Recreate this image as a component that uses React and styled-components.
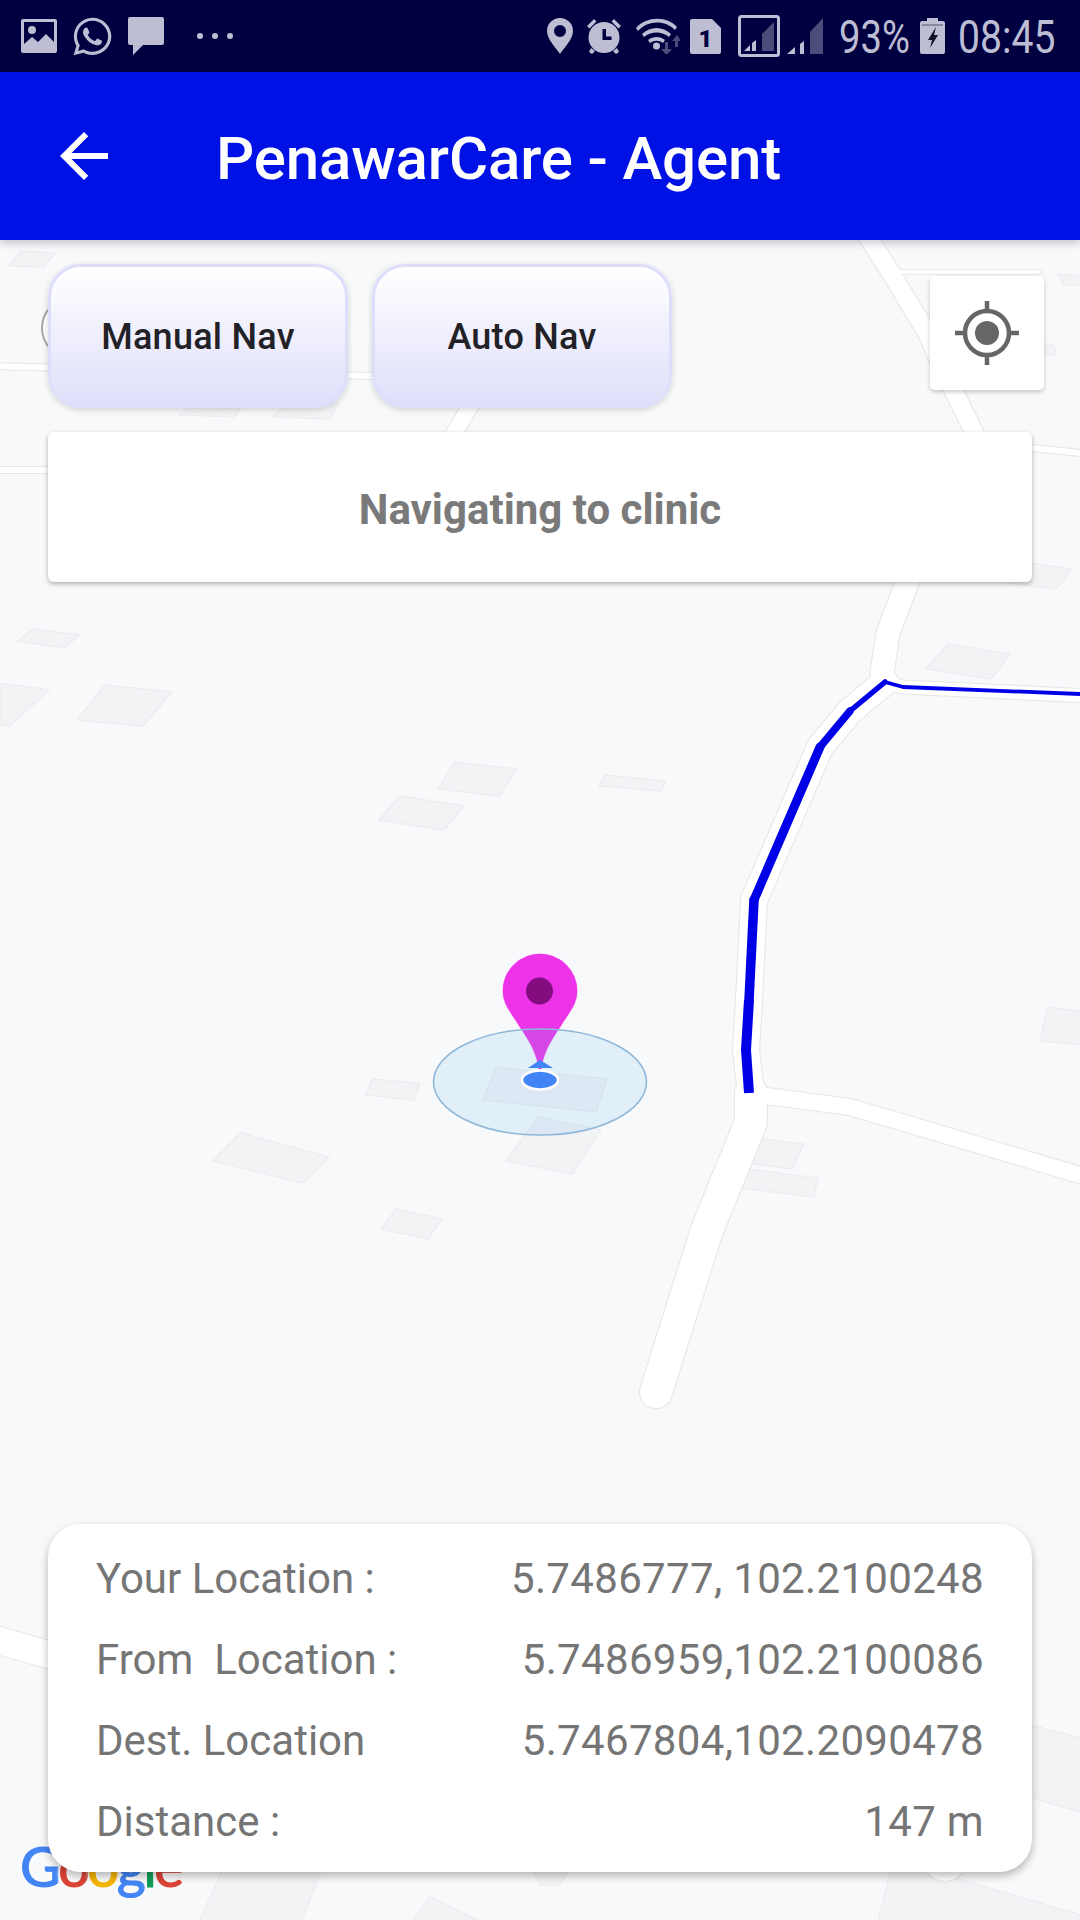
import React from 'react';
import styled, { createGlobalStyle } from 'styled-components';
import { FaWhatsapp } from 'react-icons/fa';

const Global = createGlobalStyle`
  html, body { margin: 0; padding: 0; background: #f8f9fb; }
  * { box-sizing: border-box; }
  body { font-family: Roboto, "Liberation Sans", sans-serif; }
`;

const Page = styled.div`
  width: 1080px;
  height: 1920px;
  display: flex;
  flex-direction: column;
  overflow: hidden;
`;

const StatusBar = styled.div`
  height: 72px;
  flex: none;
  background: #000040;
  color: #bdbdd3;
  display: flex;
  justify-content: space-between;
  align-items: center;
  padding: 0 25px 0 21px;
`;

const StatusGroup = styled.div`
  display: flex;
  align-items: center;
`;

const StatusGlyph = styled.svg`
  display: block;
  flex: none;
  margin-left: ${p => p.$gap || 0}px;
  fill: currentColor;
`;

const WhatsApp = styled(FaWhatsapp)`
  display: block;
  flex: none;
  margin: 0 -3px 0 14px;
  width: 43px;
  height: 43px;
`;

const StatusText = styled.span`
  display: block;
  flex: none;
  width: ${p => p.$w}px;
  margin: 2px 0 0 ${p => p.$gap}px;
  font-size: 46px;
  line-height: 50px;
  font-weight: 400;
  white-space: nowrap;
  transform: scaleX(${p => p.$sx});
  transform-origin: left center;
`;

const AppBar = styled.header`
  height: 168px;
  flex: none;
  background: #0011e6;
  color: #fff;
  display: flex;
  align-items: center;
  padding-left: 48px;
  position: relative;
  z-index: 3;
  box-shadow: 0 3px 8px rgba(0, 0, 40, 0.22);
`;

const BackIcon = styled.svg`
  width: 72px;
  height: 72px;
  fill: #fff;
  flex: none;
`;

const Title = styled.h1`
  margin: 6px 0 0 96px;
  font-size: 60px;
  line-height: 72px;
  font-weight: 500;
  letter-spacing: -0.14px;
`;

const MapArea = styled.main`
  flex: 1;
  position: relative;
  background: #f8f9fb;
`;

const MapCanvas = styled.svg`
  position: absolute;
  inset: 0;
  width: 1080px;
  height: 1680px;
`;

const Building = styled.polygon`
  fill: #f2f3f5;
  stroke: #ebecef;
  stroke-width: 1.2;
`;

const RoadCasing = styled.polyline`
  fill: none;
  stroke: #e6e7ea;
  stroke-linecap: round;
  stroke-linejoin: round;
`;

const RoadFill = styled.polyline`
  fill: none;
  stroke: #fff;
  stroke-linecap: round;
  stroke-linejoin: round;
`;

const RouteLine = styled.polyline`
  fill: none;
  stroke: #0000e6;
  stroke-linejoin: round;
  stroke-linecap: ${p => p.$cap || 'round'};
`;

const GoogleMark = styled.div`
  position: absolute;
  left: 20px;
  bottom: 19px;
  z-index: 1;
  font-family: Lato, Roboto, sans-serif;
  font-size: 56px;
  line-height: 70px;
  font-weight: 400;
  letter-spacing: -2.4px;
  -webkit-text-stroke: 1.2px currentColor;
  text-shadow: 0 0 3px #fff, 0 0 5px #fff, 0 0 6px #fff;
`;

const GoogleLetter = styled.span`
  color: ${p => p.$c};
`;

const Overlay = styled.div`
  position: relative;
  z-index: 2;
  height: 100%;
  padding: 24px 48px 48px;
  display: flex;
  flex-direction: column;
`;

const ButtonRow = styled.div`
  display: flex;
  gap: 24px;
`;

const NavButton = styled.button`
  width: 300px;
  height: 144px;
  border-radius: 33px;
  border: 3px solid #dedefa;
  background: linear-gradient(180deg, #ffffff 0%, #dfdffb 100%);
  box-shadow: 0 2px 6px rgba(0, 0, 0, 0.16);
  color: #212126;
  font-family: Roboto, sans-serif;
  font-size: 36px;
  letter-spacing: 0.25px;
  font-weight: 500;
  padding: 1px 0 0;
`;

const StatusCard = styled.div`
  margin-top: 24px;
  height: 150px;
  padding-top: 5px;
  background: #fff;
  border-radius: 6px;
  box-shadow: 0 2px 5px rgba(0, 0, 0, 0.3);
  display: flex;
  align-items: center;
  justify-content: center;
  color: #7a7a7a;
  font-size: 42px;
  font-weight: 700;
`;

const Spacer = styled.div`
  flex: 1;
`;

const InfoCard = styled.section`
  height: 348px;
  background: #fff;
  border-radius: 33px;
  padding: 14px 48px 10px;
  box-shadow: 0 4px 9px rgba(0, 0, 0, 0.28);
  display: flex;
  flex-direction: column;
  color: #757575;
  font-size: 42px;
`;

const InfoRow = styled.div`
  flex: 1;
  display: flex;
  align-items: center;
  justify-content: space-between;
  white-space: pre;
`;

const InfoValue = styled.span`
  letter-spacing: 0.33px;
`;

const LocateButton = styled.button`
  position: absolute;
  top: 36px;
  right: 36px;
  z-index: 2;
  width: 114px;
  height: 114px;
  padding: 0;
  border: 0;
  border-radius: 5px;
  background: rgba(255, 255, 255, 0.96);
  box-shadow: 0 2px 4px rgba(0, 0, 0, 0.22);
  display: flex;
  align-items: center;
  justify-content: center;
`;

const roads = [
  { w: 18, p: '857,220 870,240 891,273 927,333 941,365 973,430 985,455' },
  { w: 23, p: '985,455 925,530 907,583 888,633 882,673 885,682' },
  { w: 26, p: '885,682 850,711 820,747 754,900 749,1000 746,1050 751,1093' },
  { w: 13, p: '885,682 903,687 1090,696' },
  { w: 32, p: '751,1093 751,1122 707,1230 656,1392' },
  { w: 16, p: '751,1095 766,1096 850,1107 1090,1178' },
  { w: 3.5, p: '898,272 1040,272' },
  { w: 6, p: '-10,366 372,376 400,377' },
  { w: 6, p: '-10,470 48,470 1032,448 1090,454' },
  { w: 16, p: '478,395 469,408 455,432 440,460' },
  { w: 27, p: '-10,1638 60,1658' },
  { w: 44, p: '945,1858 945,1859' },
];

const buildings = [
  '18,641 33,629 79,635 65,648',
  '0,683 49,690 10,726 0,725',
  '77,720 105,685 172,692 143,726',
  '438,789 455,762 516,769 500,796',
  '379,820 400,796 464,806 444,830',
  '599,786 605,775 665,781 662,791',
  '366,1095 372,1079 420,1083 414,1100',
  '483,1100 496,1067 607,1079 596,1112',
  '506,1161 538,1117 601,1130 572,1174',
  '213,1161 241,1133 329,1157 303,1183',
  '381,1229 396,1209 442,1219 428,1239',
  '746,1163 756,1138 804,1144 792,1169',
  '741,1188 747,1169 818,1178 814,1197',
  '1040,1041 1048,1007 1085,1012 1085,1045',
  '926,669 948,644 1010,654 991,679',
  '1008,583 1029,563 1072,569 1056,589',
  '1058,274 1085,276 1085,285 1063,285',
  '1000,339 1054,345 1056,355 1000,352',
  '9,266 21,251 55,253 44,267',
  '179,415 188,408 241,408 234,417',
  '272,417 281,408 339,403 329,419',
  '201,1917 227,1860 325,1860 300,1925 201,1925',
  '430,1897 410,1925 489,1925',
  '893,1860 1085,1916 1085,1925 877,1925',
  '1020,1722 1085,1739 1085,1813 1020,1795',
  '530,1860 575,1860 560,1885 540,1885',
];

const rows = [
  ['Your Location :', '5.7486777, 102.2100248'],
  ['From  Location :', '5.7486959,102.2100086'],
  ['Dest. Location', '5.7467804,102.2090478'],
  ['Distance :', '147 m'],
];

const google = [['G', '#4285f4'], ['o', '#db4437'], ['o', '#f4b400'], ['g', '#4285f4'], ['l', '#0f9d58'], ['e', '#db4437']];

const MapDrawing = () => (
  <MapCanvas viewBox="0 240 1080 1680">
    {buildings.map(b => <Building key={b} points={b} />)}
    {roads.map(r => <RoadCasing key={r.p} points={r.p} strokeWidth={r.w + 2.2} />)}
    {roads.map(r => <RoadFill key={r.p} points={r.p} strokeWidth={r.w} />)}
    <circle cx="72" cy="328" r="30" fill="#fff" stroke="#a8a8a8" strokeWidth="2" />
    <RouteLine $cap="butt" points="749,1093 746,1050 749,1000" strokeWidth="10" />
    <RouteLine points="749,1000 754,900" strokeWidth="9.5" />
    <RouteLine points="754,900 820,747" strokeWidth="9" />
    <RouteLine points="820,747 850,711" strokeWidth="7.5" />
    <RouteLine points="850,711 885,682" strokeWidth="5.5" />
    <RouteLine points="885,682 903,687 1080,694" strokeWidth="3.8" />
    <path
      d="M538 1070C536 1050 524 1035 515 1021C508 1010 502 1003 502 991A38 38 0 0 1 578 991C578 1003 572 1010 565 1021C556 1035 544 1050 542 1070Z"
      fill="#ec33e8"
      stroke="#fff"
      strokeOpacity="0.8"
      strokeWidth="1.5"
    />
    <circle cx="539.5" cy="991" r="13.5" fill="#830d7e" />
    <ellipse cx="540" cy="1082" rx="106.5" ry="53" fill="rgba(95,182,240,0.15)" stroke="#8fb8da" strokeWidth="1.6" />
    <polygon points="528,1068 540,1060 553,1068" fill="#4285f4" />
    <ellipse cx="540" cy="1080" rx="18" ry="9.5" fill="#4285f4" stroke="#fff" strokeWidth="2.6" />
  </MapCanvas>
);

export default function App() {
  return (
    <Page>
      <Global />
      <StatusBar>
        <StatusGroup>
          <StatusGlyph width="36" height="34" viewBox="0 0 36 34">
            <rect width="36" height="34" rx="2" />
            <rect x="3" y="3" width="30" height="27" fill="#000040" />
            <circle cx="11" cy="11" r="4" />
            <path d="M3 25l8-7 6 5 8-8 8 8v8H3z" />
          </StatusGlyph>
          <WhatsApp />
          <StatusGlyph $gap={17} width="36" height="38" viewBox="0 0 36 38">
            <path d="M2 0h32a2 2 0 0 1 2 2v24a2 2 0 0 1-2 2H15L5 38V28H2a2 2 0 0 1-2-2V2a2 2 0 0 1 2-2z" />
          </StatusGlyph>
          <StatusGlyph $gap={33} width="36" height="8" viewBox="0 0 36 8">
            <circle cx="3" cy="4" r="3" />
            <circle cx="18" cy="4" r="3" />
            <circle cx="33" cy="4" r="3" />
          </StatusGlyph>
        </StatusGroup>
        <StatusGroup>
          <StatusGlyph width="26" height="36" viewBox="0 0 26 36">
            <path fillRule="evenodd" d="M13 0a13 13 0 0 1 13 13c0 8-9 17-13 23C9 30 0 21 0 13A13 13 0 0 1 13 0zm0 7a6 6 0 1 0 0 12 6 6 0 0 0 0-12z" />
          </StatusGlyph>
          <StatusGlyph $gap={13} width="36" height="36" viewBox="0 0 36 36">
            <circle cx="18" cy="19.500" r="15.500" />
            <path d="M1 8l7-7 2.500 2.500-7 7zM35 8l-7-7-2.500 2.500 7 7zM5 30l4 3-3 3-3-2zM31 30l-4 3 3 3 3-2z" />
            <path d="M16.500 11h3.500v7.500h5.500v3.500h-9z" fill="#000040" />
          </StatusGlyph>
          <StatusGlyph $gap={14} width="44" height="36" viewBox="0 0 44 36">
            <path d="M0 10C11-2 31-2 41 9l-2 3C29 2 12 2 2 13zM6 16c8-8 21-8 29 0l-2 3c-7-6-18-6-25 0zM12 22c5-4 12-4 17 0l-2 3c-4-3-9-3-13 0z" />
            <circle cx="20.500" cy="28" r="3.500" />
            <path d="M29 24h3v7h4l-5.500 6-5.500-6h4zM41 17l-5 6h3v6h3v-6h3z" opacity="0.4" />
          </StatusGlyph>
          <StatusGlyph $gap={10} width="31" height="35" viewBox="0 0 31 35">
            <path d="M2 0h20l9 9v24a2 2 0 0 1-2 2H2a2 2 0 0 1-2-2V2a2 2 0 0 1 2-2z" />
            <text x="15.500" y="28" textAnchor="middle" fontFamily="Roboto" fontWeight="900" fontSize="24" fill="#000040">1</text>
          </StatusGlyph>
          <StatusGlyph $gap={17} width="42" height="42" viewBox="0 0 42 42">
            <rect x="1.500" y="1.500" width="39" height="39" rx="2" fill="none" stroke="currentColor" strokeWidth="3" />
            <path d="M6 36l6-6v6zM14 28l4-3v11h-4z" />
            <path d="M24 36V19l12-12v29z" opacity="0.4" />
          </StatusGlyph>
          <StatusGlyph $gap={7} width="36" height="36" viewBox="0 0 36 36">
            <path d="M0 36l8-7v7zM13 26l4-3v13h-4z" />
            <path d="M23 36V14L36 0v36z" opacity="0.4" />
          </StatusGlyph>
          <StatusText $gap={16} $w={69} $sx={0.83}>93%</StatusText>
          <StatusGlyph $gap={12} width="25" height="36" viewBox="0 0 25 36">
            <path d="M7 0h11v3h5a2 2 0 0 1 2 2v29a2 2 0 0 1-2 2H2a2 2 0 0 1-2-2V5a2 2 0 0 1 2-2h5z" />
            <path d="M2 7h21" stroke="#55556a" strokeWidth="1" />
            <path d="M16 9l-8 13h4l-2 8 8-13h-4z" fill="#10102a" />
          </StatusGlyph>
          <StatusText $gap={13} $w={97} $sx={0.85}>08:45</StatusText>
        </StatusGroup>
      </StatusBar>
      <AppBar>
        <BackIcon viewBox="0 0 24 24">
          <path d="M20 11H7.830l5.590-5.590L12 4l-8 8 8 8 1.410-1.410L7.830 13H20v-2z" />
        </BackIcon>
        <Title>PenawarCare - Agent</Title>
      </AppBar>
      <MapArea>
        <MapDrawing />
        <GoogleMark>
          {google.map(([l, c], i) => <GoogleLetter key={i} $c={c}>{l}</GoogleLetter>)}
        </GoogleMark>
        <Overlay>
          <ButtonRow>
            <NavButton>Manual Nav</NavButton>
            <NavButton>Auto Nav</NavButton>
          </ButtonRow>
          <StatusCard>Navigating to clinic</StatusCard>
          <Spacer />
          <InfoCard>
            {rows.map(([k, v]) => (
              <InfoRow key={k}>
                <span>{k}</span>
                <InfoValue>{v}</InfoValue>
              </InfoRow>
            ))}
          </InfoCard>
        </Overlay>
        <LocateButton aria-label="My location">
          <svg width="66" height="66" viewBox="0 0 66 66" fill="none" stroke="#666" strokeWidth="4.500">
            <circle cx="33" cy="33" r="22" />
            <circle cx="33" cy="33" r="12" fill="#666" stroke="none" />
            <path d="M33 1v11M33 54v11M1 33h11M54 33h11" />
          </svg>
        </LocateButton>
      </MapArea>
    </Page>
  );
}
